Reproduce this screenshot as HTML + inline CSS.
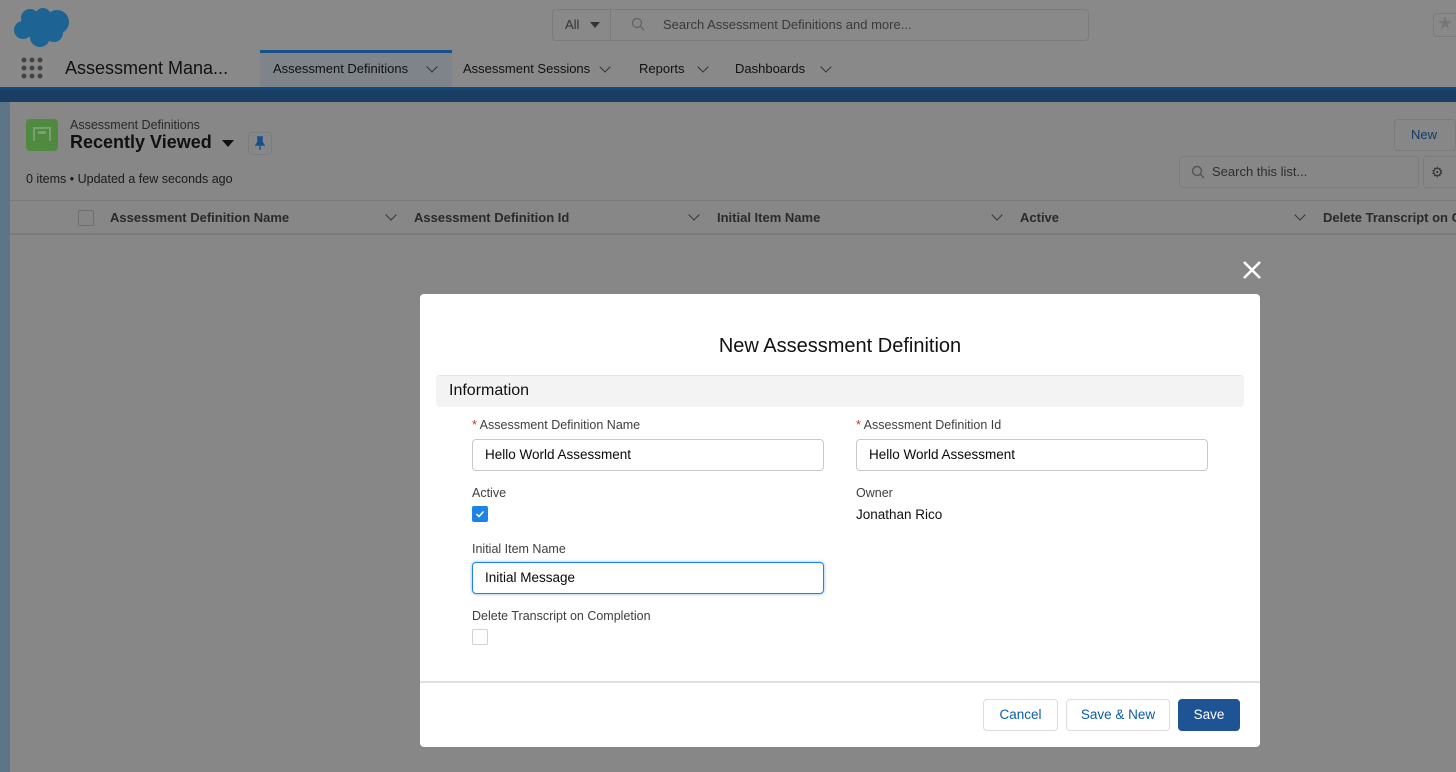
<!DOCTYPE html>
<html><head><meta charset="utf-8"><style>
*{box-sizing:border-box;margin:0;padding:0}
body{width:1456px;height:772px;overflow:hidden;background:#878787;font-family:"Liberation Sans",Arial,sans-serif;position:relative;color:#080808}
.abs{position:absolute}
.hdr{left:0;top:0;width:1456px;height:87px;background:#898989}
.band{left:0;top:87px;width:1456px;height:15px;background:#193d63;border-top:3px solid #114a80}
.side{left:0;top:102px;width:10px;height:670px;background:#5d7489}
.card{left:10px;top:102px;width:1446px;height:670px;background:#878787;border-radius:4px 0 0 0}
.t{position:absolute;white-space:nowrap}
.modal{left:420px;top:294px;width:840px;height:453px;background:#fff;border-radius:4px}
.lbl{font-size:12.5px;color:#3e3e3c}
.inp{position:absolute;width:352px;height:32px;border:1px solid #c9c9c9;border-radius:4px;font-size:13.5px;padding:7px 12px;color:#080808}
.btn{position:absolute;height:32px;border:1px solid #d8dde6;border-radius:4px;font-size:13.5px;color:#0b5cab;text-align:center;line-height:30px;background:#fff}
.th{font-size:13px;font-weight:bold;color:#2a2a2a;top:210px}
.chev{position:absolute;width:8px;height:8px;border-right:1.5px solid #333;border-bottom:1.5px solid #333;transform:rotate(45deg)}
</style></head><body>
<div class="abs hdr"></div>
<svg class="abs" style="left:12px;top:5px" width="60" height="42" viewBox="0 0 60 42"><g fill="#1d6494"><circle cx="18" cy="13" r="9"/><circle cx="31" cy="11" r="8"/><circle cx="45" cy="17" r="12"/><circle cx="11" cy="25" r="9"/><circle cx="28" cy="32" r="10"/><circle cx="42" cy="28" r="9"/><rect x="12" y="14" width="32" height="18"/></g></svg>
<div class="abs" style="left:552px;top:9px;width:537px;height:32px;border:1px solid #7c7c7c;border-radius:4px;background:#898989"></div>
<div class="abs" style="left:610px;top:10px;width:1px;height:30px;background:#7c7c7c"></div>
<div class="t" style="left:565px;top:17px;font-size:13px;color:#333">All</div>
<div class="abs" style="left:590px;top:22px;border-left:5px solid transparent;border-right:5px solid transparent;border-top:6px solid #333"></div>
<svg class="abs" style="left:631px;top:17px" width="14" height="14"><circle cx="6" cy="6" r="4.5" fill="none" stroke="#666" stroke-width="1.4"/><line x1="9.5" y1="9.5" x2="13" y2="13" stroke="#666" stroke-width="1.4"/></svg>
<div class="t" style="left:663px;top:17px;font-size:13px;color:#3a3a3a">Search Assessment Definitions and more...</div>
<div class="abs" style="left:1433px;top:13px;width:30px;height:24px;border:1px solid #7c7c7c;border-radius:4px"></div>
<div class="t" style="left:1437px;top:13px;font-size:18px;color:#777">★</div>
<svg class="abs" style="left:21px;top:57px" width="24" height="24"><g fill="#444"><circle cx="3" cy="3" r="2.5"/><circle cx="11" cy="3" r="2.5"/><circle cx="19" cy="3" r="2.5"/><circle cx="3" cy="11" r="2.5"/><circle cx="11" cy="11" r="2.5"/><circle cx="19" cy="11" r="2.5"/><circle cx="3" cy="19" r="2.5"/><circle cx="11" cy="19" r="2.5"/><circle cx="19" cy="19" r="2.5"/></g></svg>
<div class="t" style="left:65px;top:58px;font-size:18px;color:#111">Assessment Mana...</div>
<div class="abs" style="left:260px;top:50px;width:192px;height:37px;background:#7e848a;border-top:3px solid #17508a"></div>
<div class="t" style="left:273px;top:61px;font-size:13px;color:#111">Assessment Definitions</div>
<div class="chev" style="left:428px;top:63px"></div>
<div class="t" style="left:463px;top:61px;font-size:13px;color:#111">Assessment Sessions</div>
<div class="chev" style="left:601px;top:63px"></div>
<div class="t" style="left:639px;top:61px;font-size:13px;color:#111">Reports</div>
<div class="chev" style="left:699px;top:63px"></div>
<div class="t" style="left:735px;top:61px;font-size:13px;color:#111">Dashboards</div>
<div class="chev" style="left:822px;top:63px"></div>
<div class="abs band"></div>
<div class="abs side"></div>
<div class="abs card"></div>
<div class="abs" style="left:26px;top:119px;width:32px;height:32px;background:#4f8a3f;border-radius:4px"></div>
<div class="abs" style="left:33px;top:127px;width:18px;height:14px;border:2px solid #7a9f6e;border-bottom:none"></div>
<div class="abs" style="left:38px;top:131px;width:8px;height:3px;background:#7a9f6e"></div>
<div class="t" style="left:70px;top:118px;font-size:12.5px;color:#2a2a2a">Assessment Definitions</div>
<div class="t" style="left:70px;top:132px;font-size:18px;font-weight:bold;color:#111">Recently Viewed</div>
<div class="abs" style="left:222px;top:140px;border-left:6px solid transparent;border-right:6px solid transparent;border-top:7px solid #111"></div>
<div class="abs" style="left:248px;top:132px;width:24px;height:23px;border:1px solid #7c7c7c;border-radius:4px"></div>
<svg class="abs" style="left:254px;top:136px" width="12" height="15"><path d="M3 1H9M4 1V6L2 9H10L8 6V1M6 9V14" fill="#17508a" stroke="#17508a" stroke-width="1.4"/></svg>
<div class="t" style="left:26px;top:172px;font-size:12.5px;color:#1a1a1a">0 items • Updated a few seconds ago</div>
<div class="abs" style="left:1394px;top:119px;width:62px;height:32px;border:1px solid #7c7c7c;border-radius:4px"></div>
<div class="t" style="left:1411px;top:127px;font-size:13px;color:#123b66">New</div>
<div class="abs" style="left:1179px;top:156px;width:240px;height:32px;border:1px solid #7c7c7c;border-radius:4px"></div>
<svg class="abs" style="left:1191px;top:165px" width="14" height="14"><circle cx="6" cy="6" r="4.5" fill="none" stroke="#555" stroke-width="1.4"/><line x1="9.5" y1="9.5" x2="13" y2="13" stroke="#555" stroke-width="1.4"/></svg>
<div class="t" style="left:1212px;top:164px;font-size:13px;color:#2f2f2f">Search this list...</div>
<div class="abs" style="left:1423px;top:156px;width:40px;height:32px;border:1px solid #7c7c7c;border-radius:4px"></div>
<div class="t" style="left:1431px;top:164px;font-size:14px;color:#333">⚙</div>
<div class="abs" style="left:10px;top:200px;width:1446px;height:1px;background:#7a7a7a"></div>
<div class="abs" style="left:10px;top:233px;width:1446px;height:2px;background:#7a7a7a"></div>
<div class="abs" style="left:78px;top:210px;width:16px;height:16px;border:1px solid #6f6f6f;border-radius:2px;background:#868686"></div>
<div class="t th" style="left:110px">Assessment Definition Name</div>
<div class="chev" style="left:387px;top:211px"></div>
<div class="t th" style="left:414px">Assessment Definition Id</div>
<div class="chev" style="left:690px;top:211px"></div>
<div class="t th" style="left:717px">Initial Item Name</div>
<div class="chev" style="left:993px;top:211px"></div>
<div class="t th" style="left:1020px">Active</div>
<div class="chev" style="left:1296px;top:211px"></div>
<div class="t th" style="left:1323px">Delete Transcript on C</div>
<svg class="abs" style="left:1242px;top:260px" width="20" height="20"><path d="M2 2L18 18M18 2L2 18" stroke="#fff" stroke-width="2.6"/></svg>
<div class="abs modal"></div>
<div class="t" style="left:0;width:1680px;text-align:center;top:335px;font-size:20px;color:#111">New Assessment Definition</div>
<div class="abs" style="left:436px;top:375px;width:808px;height:32px;background:#f3f3f3;border-radius:4px;border-top:1px solid #e5e5e5"></div>
<div class="t" style="left:449px;top:382px;font-size:16px;color:#111">Information</div>
<div class="t lbl" style="left:472px;top:418px"><span style="color:#c23934">* </span>Assessment Definition Name</div>
<div class="inp" style="left:472px;top:439px">Hello World Assessment</div>
<div class="t lbl" style="left:856px;top:418px"><span style="color:#c23934">* </span>Assessment Definition Id</div>
<div class="inp" style="left:856px;top:439px">Hello World Assessment</div>
<div class="t lbl" style="left:472px;top:486px">Active</div>
<div class="abs" style="left:472px;top:506px;width:16px;height:16px;background:#1b84e6;border-radius:2px"></div>
<svg class="abs" style="left:475px;top:509px" width="10" height="10"><path d="M1.5 5L4 7.5L8.5 2.5" fill="none" stroke="#fff" stroke-width="1.5"/></svg>
<div class="t lbl" style="left:856px;top:486px">Owner</div>
<div class="t" style="left:856px;top:507px;font-size:13.5px;color:#111">Jonathan Rico</div>
<div class="t lbl" style="left:472px;top:542px">Initial Item Name</div>
<div class="inp" style="left:472px;top:562px;border-color:#1b84e6;box-shadow:0 0 3px #7bb6ee">Initial Message</div>
<div class="t lbl" style="left:472px;top:609px">Delete Transcript on Completion</div>
<div class="abs" style="left:472px;top:629px;width:16px;height:16px;border:1px solid #d0d0d0;border-radius:2px"></div>
<div class="abs" style="left:420px;top:681px;width:840px;height:2px;background:#e0e0e0"></div>
<div class="btn" style="left:983px;top:699px;width:75px">Cancel</div>
<div class="btn" style="left:1066px;top:699px;width:104px">Save &amp; New</div>
<div class="btn" style="left:1178px;top:699px;width:62px;background:#1f5494;border-color:#1f5494;color:#fff">Save</div>
</body></html>
